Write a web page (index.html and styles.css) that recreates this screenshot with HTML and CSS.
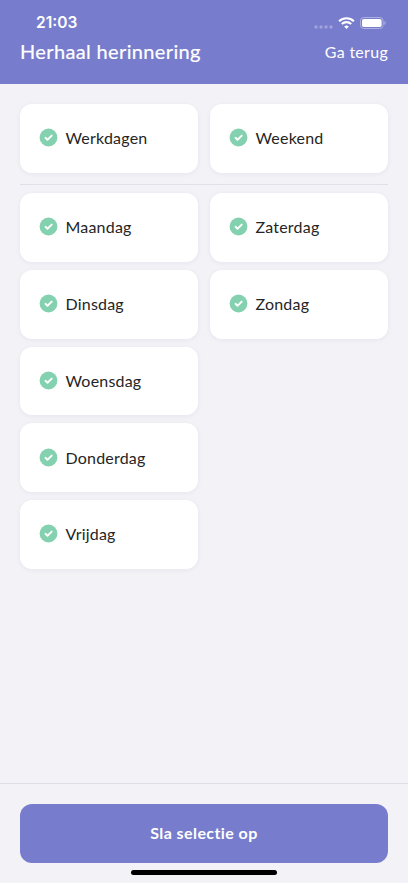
FILE: index.html
```html
<!DOCTYPE html>
<html lang="nl">
<head>
<meta charset="utf-8">
<title>Herhaal herinnering</title>
<link rel="stylesheet" href="styles.css">
</head>
<body>
<svg class="defs" width="0" height="0"><symbol id="check" viewBox="-.5 -.5 19 19"><circle cx="9" cy="9" r="8.9" fill="#84d1af"/><path d="M6 9.3l2 1.9 4.2-4.1" fill="none" stroke="#fff" stroke-width="1.9" stroke-linecap="round" stroke-linejoin="round"/></symbol></svg>
<div class="screen">
  <header class="header">
    <div class="status"><span class="time">21:03</span>
      <div class="indicators">
        <svg class="dots" width="19" height="4" viewBox="0 0 19 4" fill="#a0a3dc"><circle cx="2" cy="2" r="1.7"/><circle cx="7" cy="2" r="1.7"/><circle cx="12" cy="2" r="1.7"/><circle cx="17" cy="2" r="1.7"/></svg>
        <svg width="17" height="12" viewBox="0 0 17 12" fill="none" stroke="#fff" stroke-width="2.1"><path d="M1.1 4.2a10.6 10.6 0 0 1 14.8 0M3.8 7.1a6.7 6.7 0 0 1 9.4 0"/><path d="M8.5 12L6.2 9.6a3.3 3.3 0 0 1 4.6 0z" fill="#fff" stroke="none"/></svg>
        <svg width="26" height="12" viewBox="0 0 26 12"><rect x=".5" y=".5" width="22.6" height="11" rx="3.3" fill="none" stroke="#adb0e0"/><rect x="2" y="2" width="19.6" height="8" rx="1.8" fill="#fff"/><path d="M24.4 4v4c1.7-.7 1.7-3.3 0-4" fill="#adb0e0"/></svg>
      </div>
    </div>
    <div class="nav"><h1 class="title">Herhaal herinnering</h1><a class="back">Ga terug</a></div>
  </header>
  <main class="main">
    <section class="groups">
      <div class="card"><svg class="check"><use href="#check"/></svg><span>Werkdagen</span></div>
      <div class="card"><svg class="check"><use href="#check"/></svg><span>Weekend</span></div>
    </section>
    <section class="days">
      <div class="column">
        <div class="card"><svg class="check"><use href="#check"/></svg><span>Maandag</span></div>
        <div class="card"><svg class="check"><use href="#check"/></svg><span>Dinsdag</span></div>
        <div class="card"><svg class="check"><use href="#check"/></svg><span>Woensdag</span></div>
        <div class="card"><svg class="check"><use href="#check"/></svg><span>Donderdag</span></div>
        <div class="card"><svg class="check"><use href="#check"/></svg><span>Vrijdag</span></div>
      </div>
      <div class="column">
        <div class="card"><svg class="check"><use href="#check"/></svg><span>Zaterdag</span></div>
        <div class="card"><svg class="check"><use href="#check"/></svg><span>Zondag</span></div>
      </div>
    </section>
  </main>
  <footer class="footer"><button class="save">Sla selectie op</button><div class="home"></div></footer>
</div>
</body>
</html>
```
FILE: styles.css
```css
* { box-sizing: border-box; }
body { margin: 0; font-family: Lato, sans-serif; font-variant-ligatures: none; color: #252525; background: #f3f2f7; }
.defs { position: absolute; }
.screen { height: 883px; display: flex; flex-direction: column; overflow: hidden; }
.header { height: 84px; background: #787ccc; color: #fff; flex: none; }
.status { height: 37px; padding: 8px 22px 0 36px; display: flex; justify-content: space-between; align-items: center; }
.time { padding-top: 1px; font: 600 15.5px/20px Inter, sans-serif; }
.indicators { display: flex; align-items: center; gap: 5px; }
.dots { margin-top: 8px; }
.nav { height: 28px; padding: 0 20px; display: flex; justify-content: space-between; align-items: center; }
.title { margin: 0; font-size: 20px; font-weight: 400; letter-spacing: .36px; -webkit-text-stroke: .2px #fff; }
.back { font-size: 16px; letter-spacing: .28px; }
.main { flex: 1; padding: 20px 20px 0; }
.groups, .days { display: grid; grid-template-columns: 1fr 1fr; gap: 12px; }
.groups { padding-bottom: 11.2px; border-bottom: 1px solid #e2e1e9; margin-bottom: 8px; }
.column { display: flex; flex-direction: column; gap: 8px; }
.card { height: 68.8px; padding: 0 0 1.5px 19px; display: flex; align-items: center; gap: 7.5px; background: #fff; border-radius: 12px; box-shadow: 0 1px 5px rgba(40,40,80,.06); font-size: 16px; letter-spacing: .2px; }
.check { width: 19px; height: 19px; flex: none; }
.footer { height: 100px; flex: none; border-top: 1px solid #dfdee7; padding: 20px 20px 0; }
.save { display: block; width: 100%; height: 59px; padding: 0 0 2px; border: 0; border-radius: 12px; background: #787ccc; color: #fff; font: 700 16px Lato, sans-serif; font-variant-ligatures: none; letter-spacing: .42px; }
.home { width: 146px; height: 5px; margin: 7px auto 0; border-radius: 3px; background: #000; }
```
